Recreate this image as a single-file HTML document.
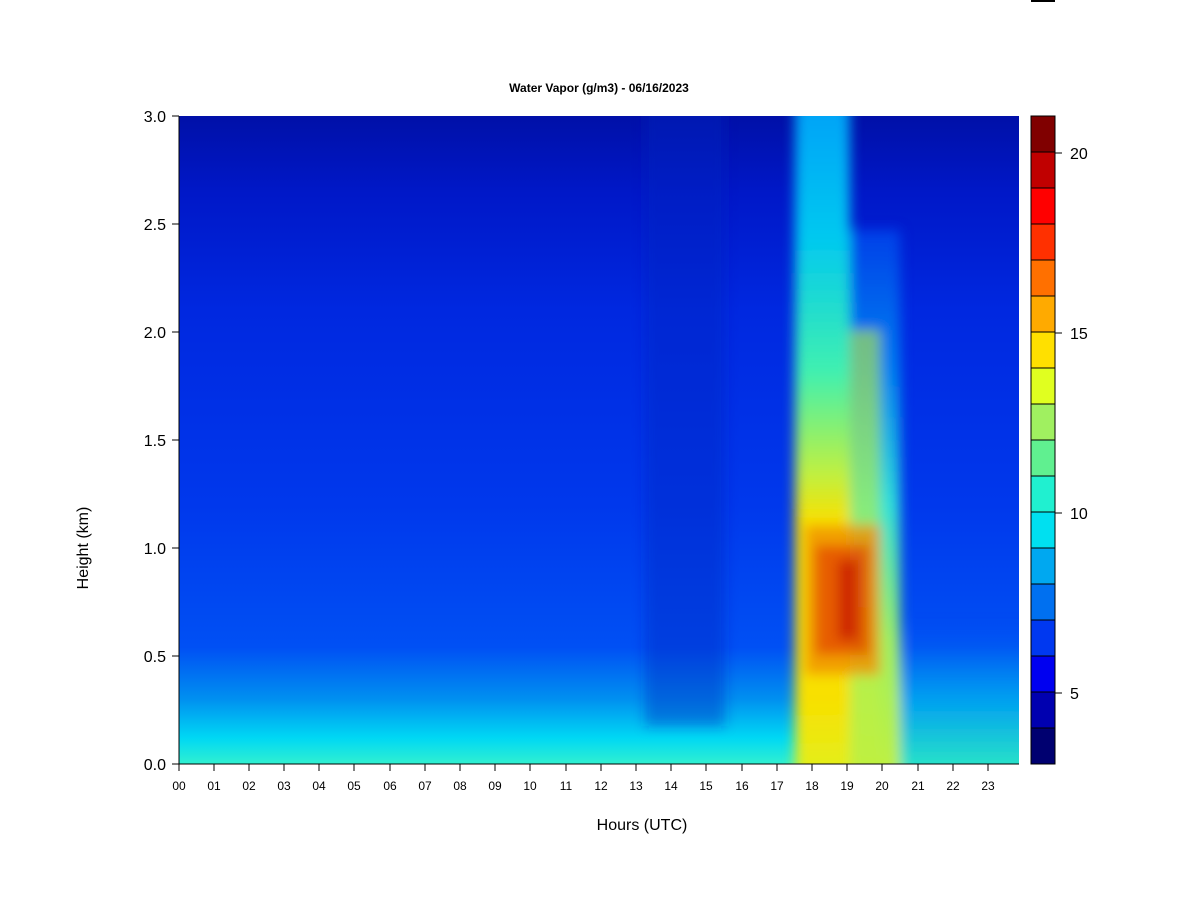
<!DOCTYPE html>
<html><head><style>
body{margin:0;background:#fff;width:1200px;height:900px;overflow:hidden;font-family:"Liberation Sans",Arial,sans-serif}
</style></head><body>
<svg width="1200" height="900" xmlns="http://www.w3.org/2000/svg" font-family="Liberation Sans, Arial, sans-serif">
<defs>
<linearGradient id="bg" x1="0" y1="0" x2="0" y2="1">
<stop offset="0" stop-color="#0010a8"/>
<stop offset="0.12" stop-color="#0018c8"/>
<stop offset="0.3" stop-color="#0028e0"/>
<stop offset="0.6" stop-color="#0038ec"/>
<stop offset="0.82" stop-color="#0050f4"/>
<stop offset="0.9" stop-color="#0090f0"/>
<stop offset="0.96" stop-color="#00d8f4"/>
<stop offset="1" stop-color="#30f0d0"/>
</linearGradient>
<linearGradient id="ev" x1="0" y1="0" x2="0" y2="1">
<stop offset="0" stop-color="#00a0f8"/>
<stop offset="0.2" stop-color="#00c8f0"/>
<stop offset="0.4" stop-color="#40f0b0"/>
<stop offset="0.55" stop-color="#c0f040"/>
<stop offset="0.62" stop-color="#f8e000"/>
<stop offset="0.88" stop-color="#f8e000"/>
<stop offset="1" stop-color="#e0f020"/>
</linearGradient>
<linearGradient id="ev2" x1="0" y1="0" x2="0" y2="1">
<stop offset="0" stop-color="#0040e8"/>
<stop offset="0.25" stop-color="#0080f0"/>
<stop offset="0.5" stop-color="#30e0d8"/>
<stop offset="0.75" stop-color="#a0f060"/>
<stop offset="1" stop-color="#c0f040"/>
</linearGradient>
<linearGradient id="rt" x1="0" y1="0" x2="0" y2="1">
<stop offset="0" stop-color="#0050f4" stop-opacity="0"/>
<stop offset="0.5" stop-color="#00a0f0"/>
<stop offset="1" stop-color="#30f0c0"/>
</linearGradient>
<filter id="bl"><feGaussianBlur stdDeviation="6"/></filter>
<clipPath id="cp"><rect x="179" y="116" width="840" height="648"/></clipPath>
</defs>
<rect x="1031" y="0" width="24" height="2" fill="#000"/>
<text x="599" y="92" font-size="12" font-weight="bold" text-anchor="middle">Water Vapor (g/m3) - 06/16/2023</text>
<rect x="179" y="116" width="840" height="648" fill="url(#bg)"/>
<g clip-path="url(#cp)">
<g filter="url(#bl)">
<rect x="645" y="100" width="80" height="626" fill="#0020c0" opacity="0.4"/>
<rect x="900" y="620" width="130" height="160" fill="url(#rt)"/>
<rect x="800" y="230" width="100" height="550" fill="url(#ev2)"/>
<rect x="795" y="100" width="55" height="680" fill="url(#ev)"/>
<rect x="850" y="330" width="30" height="450" fill="#c0f040" opacity="0.6"/>
<rect x="805" y="525" width="75" height="150" fill="#f09000" opacity="0.8"/>
<rect x="815" y="545" width="55" height="110" fill="#e03000" opacity="0.6"/>
<rect x="838" y="560" width="20" height="80" fill="#c00000" opacity="0.6"/>
</g>
</g>
<g stroke="#000" stroke-width="1">
<rect x="1031" y="116" width="24" height="36" fill="#800000"/>
<rect x="1031" y="152" width="24" height="36" fill="#c00000"/>
<rect x="1031" y="188" width="24" height="36" fill="#ff0000"/>
<rect x="1031" y="224" width="24" height="36" fill="#ff3000"/>
<rect x="1031" y="260" width="24" height="36" fill="#ff7000"/>
<rect x="1031" y="296" width="24" height="36" fill="#ffaa00"/>
<rect x="1031" y="332" width="24" height="36" fill="#ffe000"/>
<rect x="1031" y="368" width="24" height="36" fill="#e0ff20"/>
<rect x="1031" y="404" width="24" height="36" fill="#a0f060"/>
<rect x="1031" y="440" width="24" height="36" fill="#60f090"/>
<rect x="1031" y="476" width="24" height="36" fill="#20f0d0"/>
<rect x="1031" y="512" width="24" height="36" fill="#00e0f0"/>
<rect x="1031" y="548" width="24" height="36" fill="#00a8f0"/>
<rect x="1031" y="584" width="24" height="36" fill="#0070f0"/>
<rect x="1031" y="620" width="24" height="36" fill="#0038f0"/>
<rect x="1031" y="656" width="24" height="36" fill="#0000f0"/>
<rect x="1031" y="692" width="24" height="36" fill="#0000b0"/>
<rect x="1031" y="728" width="24" height="36" fill="#000070"/>
<line x1="1055" y1="153" x2="1062" y2="153"/>
<line x1="1055" y1="333" x2="1062" y2="333"/>
<line x1="1055" y1="513" x2="1062" y2="513"/>
<line x1="1055" y1="693" x2="1062" y2="693"/>
</g>
<g font-size="16">
<text x="1070" y="159">20</text><text x="1070" y="339">15</text><text x="1070" y="519">10</text><text x="1070" y="699">5</text>
</g>
<g stroke="#000" stroke-width="1">
<line x1="179" y1="116" x2="179" y2="764"/>
<line x1="172" y1="116" x2="179" y2="116"/><line x1="172" y1="224" x2="179" y2="224"/>
<line x1="172" y1="332" x2="179" y2="332"/><line x1="172" y1="440" x2="179" y2="440"/>
<line x1="172" y1="548" x2="179" y2="548"/><line x1="172" y1="656" x2="179" y2="656"/>
<line x1="172" y1="764" x2="1019" y2="764"/>
</g>
<g font-size="16" text-anchor="end">
<text x="166" y="122">3.0</text><text x="166" y="230">2.5</text><text x="166" y="338">2.0</text>
<text x="166" y="446">1.5</text><text x="166" y="554">1.0</text><text x="166" y="662">0.5</text><text x="166" y="770">0.0</text>
</g>
<text x="88" y="548" font-size="16" text-anchor="middle" transform="rotate(-90 88 548)">Height (km)</text>
<text x="642" y="830" font-size="16" text-anchor="middle">Hours (UTC)</text>
<g stroke="#000">
<line x1="179" y1="764" x2="179" y2="771"/><line x1="214" y1="764" x2="214" y2="771"/><line x1="249" y1="764" x2="249" y2="771"/><line x1="284" y1="764" x2="284" y2="771"/><line x1="319" y1="764" x2="319" y2="771"/><line x1="354" y1="764" x2="354" y2="771"/><line x1="390" y1="764" x2="390" y2="771"/><line x1="425" y1="764" x2="425" y2="771"/><line x1="460" y1="764" x2="460" y2="771"/><line x1="495" y1="764" x2="495" y2="771"/><line x1="530" y1="764" x2="530" y2="771"/><line x1="566" y1="764" x2="566" y2="771"/><line x1="601" y1="764" x2="601" y2="771"/><line x1="636" y1="764" x2="636" y2="771"/><line x1="671" y1="764" x2="671" y2="771"/><line x1="706" y1="764" x2="706" y2="771"/><line x1="742" y1="764" x2="742" y2="771"/><line x1="777" y1="764" x2="777" y2="771"/><line x1="812" y1="764" x2="812" y2="771"/><line x1="847" y1="764" x2="847" y2="771"/><line x1="882" y1="764" x2="882" y2="771"/><line x1="918" y1="764" x2="918" y2="771"/><line x1="953" y1="764" x2="953" y2="771"/><line x1="988" y1="764" x2="988" y2="771"/>
</g>
<g font-size="12" text-anchor="middle">
<text x="179" y="790">00</text><text x="214" y="790">01</text><text x="249" y="790">02</text><text x="284" y="790">03</text><text x="319" y="790">04</text><text x="354" y="790">05</text><text x="390" y="790">06</text><text x="425" y="790">07</text><text x="460" y="790">08</text><text x="495" y="790">09</text><text x="530" y="790">10</text><text x="566" y="790">11</text><text x="601" y="790">12</text><text x="636" y="790">13</text><text x="671" y="790">14</text><text x="706" y="790">15</text><text x="742" y="790">16</text><text x="777" y="790">17</text><text x="812" y="790">18</text><text x="847" y="790">19</text><text x="882" y="790">20</text><text x="918" y="790">21</text><text x="953" y="790">22</text><text x="988" y="790">23</text>
</g>
</svg>
</body></html>
